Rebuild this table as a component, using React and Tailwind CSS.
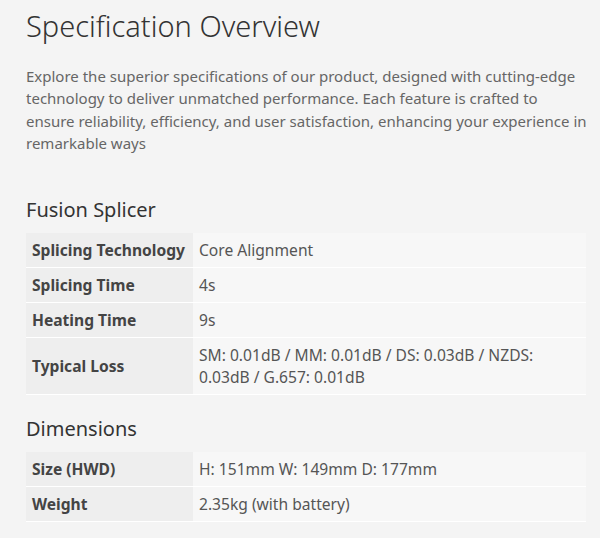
import React from 'react';

function SpecTable({ rows }) {
  return (
    <table className="w-[560px] border-collapse">
      <tbody>
        {rows.map(([label, value]) => (
          <tr key={label} className="border-b border-white">
            <td className="w-[167px] bg-[#eeeeee] px-[6px] py-[6px] text-[15.6px] leading-[22px] font-bold text-[#444] align-middle">{label}</td>
            <td className="bg-[#f7f7f7] px-[6px] py-[6px] text-[15.6px] leading-[22px] text-[#555] align-middle">{value}</td>
          </tr>
        ))}
      </tbody>
    </table>
  );
}

export default function App() {
  const splicer = [
    ['Splicing Technology', 'Core Alignment'],
    ['Splicing Time', '4s'],
    ['Heating Time', '9s'],
    ['Typical Loss', 'SM: 0.01dB / MM: 0.01dB / DS: 0.03dB / NZDS: 0.03dB / G.657: 0.01dB'],
  ];
  const dimensions = [
    ['Size (HWD)', 'H: 151mm W: 149mm D: 177mm'],
    ['Weight', '2.35kg (with battery)'],
  ];

  return (
    <div className="min-h-[538px] bg-[#f4f4f4] pl-[26px] pr-[14px] pt-[4px] font-['Noto_Sans',sans-serif]">
      <h1 className="text-[29px] leading-[44px] font-light text-[#333]">Specification Overview</h1>
      <p className="mt-[17px] mr-[-2px] text-[15px] leading-[22.3px] text-[#666]">
        Explore the superior specifications of our product, designed with cutting-edge technology to deliver unmatched performance. Each feature is crafted to ensure reliability, efficiency, and user satisfaction, enhancing your experience in remarkable ways
      </p>

      <h2 className="mt-[42px] mb-[9px] text-[20px] leading-[28px] text-[#333]">Fusion Splicer</h2>
      <SpecTable rows={splicer} />

      <h2 className="mt-[20px] mb-[9px] text-[20px] leading-[28px] text-[#333]">Dimensions</h2>
      <SpecTable rows={dimensions} />
    </div>
  );
}
